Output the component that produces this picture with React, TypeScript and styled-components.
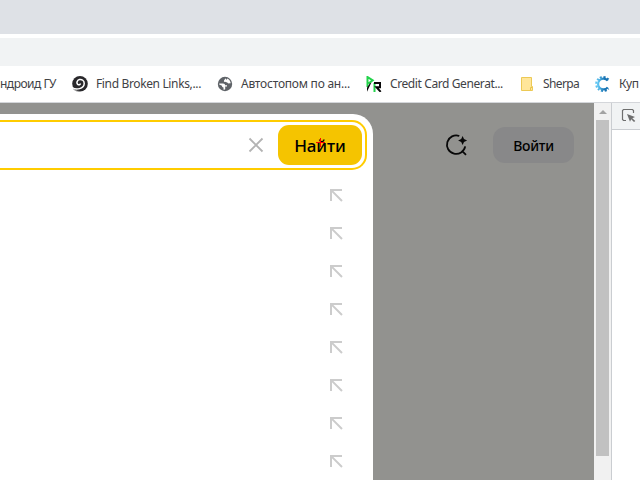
import React from 'react';
import styled, { createGlobalStyle } from 'styled-components';

const Global = createGlobalStyle`
  * { box-sizing: border-box; }
  body { margin: 0; overflow: hidden; background: #fff; font-family: "Noto Sans", "Open Sans", sans-serif; }
  svg { display: block; flex: none; }
`;

const Browser = styled.div`
  width: 640px;
  height: 480px;
  overflow: hidden;
  display: flex;
  flex-direction: column;
`;
const TabStrip = styled.div`
  height: 34px;
  flex: none;
  background: #dee1e6;
`;
const AddressBar = styled.div`
  height: 28px;
  flex: none;
  margin-top: 4px;
  background: #f1f3f4;
`;
const Bookmarks = styled.nav`
  height: 37px;
  flex: none;
  display: flex;
  align-items: center;
  border-bottom: 1px solid #d4d6da;
  overflow: hidden;
`;
const Bookmark = styled.div<{ $width: number }>`
  display: flex;
  align-items: center;
  flex: none;
  gap: 8px;
  width: ${p => p.$width}px;
`;
const Label = styled.span<{ $spacing?: number }>`
  font-size: 12px;
  line-height: 16px;
  white-space: nowrap;
  color: #3f4246;
  letter-spacing: ${p => p.$spacing ?? 0}px;
`;
const Main = styled.div`
  flex: 1;
  min-height: 0;
  display: flex;
`;
const Page = styled.main`
  width: 594px;
  flex: none;
  display: flex;
  align-items: flex-start;
  background: #92928f;
`;
const SearchPanel = styled.section`
  width: 373px;
  height: 366px;
  margin-top: 11px;
  padding-top: 6px;
  background: #fff;
  border-top-right-radius: 20px;
`;
const SearchField = styled.div`
  width: 367px;
  height: 50px;
  display: flex;
  align-items: center;
  justify-content: flex-end;
  gap: 14px;
  padding-right: 3px;
  border: 2px solid #fc0;
  border-left: 0;
  border-radius: 0 15px 15px 0;
`;
const FindButton = styled.button`
  position: relative;
  width: 84px;
  height: 40px;
  padding: 1px 0 0;
  border: 0;
  border-radius: 11px;
  background: #f5c400;
  color: #000;
  font: 500 17px/24px "Noto Sans", sans-serif;
  letter-spacing: -0.1px;
`;
const Cursor = styled.svg`
  position: absolute;
  left: 38px;
  top: 13px;
`;
const Suggestions = styled.div`
  display: flex;
  flex-direction: column;
  align-items: flex-end;
  padding: 6px 30px 0 0;
`;
const Suggestion = styled.div`
  height: 38px;
  display: flex;
  align-items: center;
`;
const Account = styled.div`
  display: flex;
  align-items: center;
  gap: 25px;
  margin: 24px 0 0 71px;
`;
const Login = styled.button`
  width: 81px;
  height: 36px;
  padding: 1px 0 0;
  border: 0;
  border-radius: 12px;
  background: #888889;
  color: #000;
  font: 500 14px/20px "Noto Sans", sans-serif;
  letter-spacing: -0.3px;
`;
const Scrollbar = styled.div`
  width: 17px;
  flex: none;
  display: flex;
  flex-direction: column;
  align-items: center;
  background: #f1f1f1;
`;
const ScrollArrow = styled.div`
  height: 17px;
  display: flex;
  align-items: center;
`;
const Thumb = styled.div`
  width: 13px;
  height: 336px;
  background: #c1c1c1;
`;
const DevTools = styled.aside`
  flex: 1;
  border-left: 1px solid #cacdd1;
  background: #fff;
`;
const DevToolbar = styled.div`
  height: 27px;
  display: flex;
  align-items: center;
  padding-left: 9px;
  background: #f1f3f4;
  border-bottom: 1px solid #cacdd1;
`;

const Swirl = () => (
  <svg width="16" height="16" viewBox="0 0 16 16">
    <circle cx="8" cy="7.8" r="7.8" fill="#29282b" />
    <path d="M0 11.5C4.2 14.4 11.9 12.8 12.2 7.8C12.4 4.6 9.8 3 7.4 3.6C5 4.2 4.2 7 5.8 8.4C6.8 9.2 8.3 8.8 8.4 7.5" fill="none" stroke="#fff" strokeWidth="1.5" />
    <path d="M0 11.2L5.5 16H0Z" fill="#fff" />
    <path d="M1.4 13.2Q4 15.5 7.5 15.3" fill="none" stroke="#888" strokeWidth=".8" />
  </svg>
);
const Globe = () => (
  <svg width="16" height="16" viewBox="0 0 16 16">
    <circle cx="8" cy="8" r="7.2" fill="#5f6368" />
    <path d="M2.2 7.6H6C7.6 7.6 8 8.5 8 9.2H10V10.6H8.2V13.3C7.6 13.8 6.8 13.7 6.5 13.4V11.6C5.4 11.5 5 10.7 5 9.8L2.2 8.6ZM8.6 2.3C7.8 3.9 6.9 3.8 6.9 5.4C8.1 6.3 9.3 5.7 10.2 6.6C11 7.8 12.2 7.4 13.7 7.3C13.5 5.1 12.1 3.2 10.2 2.5L9.5 4Z" fill="#fff" />
  </svg>
);
const Monogram = () => (
  <svg width="16" height="16" viewBox="0 0 16 16">
    <path d="M1.5 11V1L6.7 4.3L2.5 7.5" fill="none" stroke="#23d34b" strokeWidth="2" />
    <path d="M5.4 6.6L1 15.8V11.6L3.8 7.5Z" fill="#080808" />
    <path d="M8.5 16V7" stroke="#23d34b" strokeWidth="2" />
    <path d="M8 7.1H14V11.2H10.5L14.7 15.8" fill="none" stroke="#080808" strokeWidth="2" />
  </svg>
);
const Note = () => (
  <svg width="16" height="16" viewBox="0 0 16 16">
    <path d="M2.5 1.5H12.5V10.5H13.5V14.5H2.5Z" fill="#ffe69a" stroke="#ecc955" />
    <path d="M11.5 14V11.5H13" fill="none" stroke="#e9c44d" />
  </svg>
);
const Gear = () => (
  <svg width="16" height="16" viewBox="0 0 16 16">
    <defs>
      <linearGradient id="gear" x1="0" x2="1"><stop stopColor="#62c8f4" /><stop offset=".65" stopColor="#1874b4" /></linearGradient>
    </defs>
    <path d="M12.7 4.7A5.4 5.4 0 1 0 12.7 11.3" fill="none" stroke="url(#gear)" strokeWidth="2.2" />
    <path d="M13.5 3.5A7 7 0 1 0 13.5 12.5" fill="none" stroke="url(#gear)" strokeWidth="2" strokeDasharray="2 1.6" />
  </svg>
);
const Clear = () => (
  <svg width="16" height="16" viewBox="0 0 16 16">
    <path d="M1.5 1.5L14.5 14.5M14.5 1.5L1.5 14.5" stroke="#b3b3b3" strokeWidth="1.8" />
  </svg>
);
const InsertArrow = () => (
  <svg width="13" height="13" viewBox="0 0 13 13">
    <path d="M12 1H1V12M1.4 1.4L12 12" fill="none" stroke="#ccc" strokeWidth="2" />
  </svg>
);
const SmartSearch = () => (
  <svg width="24" height="24" viewBox="0 0 24 24">
    <path d="M15.3 3A9.2 9.2 0 1 0 21.2 13.4M18.5 18.3L22 21.8" fill="none" stroke="#080808" strokeWidth="1.8" />
    <path d="M18.6 3L20 6L23.1 7.5L20 9L18.6 12L17.2 9L14.1 7.5L17.2 6Z" fill="#080808" />
  </svg>
);
const Inspect = () => (
  <svg width="16" height="16" viewBox="0 0 16 16">
    <path d="M5 12.5H2.5L1.5 11.5V2.5L2.5 1.5H11.5L12.5 2.5V5" fill="none" stroke="#6e6e6e" strokeWidth="1.2" />
    <path d="M6 6L14 9L11.3 10.2L14.3 13L13 14L10.2 11.2L9 13.7Z" fill="#6e6e6e" />
  </svg>
);

export default function App() {
  return (
    <>
      <Global />
      <Browser>
        <TabStrip />
        <AddressBar />
        <Bookmarks>
          <Bookmark $width={72}><Label $spacing={-0.5}>ндроид ГУ</Label></Bookmark>
          <Bookmark $width={145}><Swirl /><Label $spacing={-0.36}>Find Broken Links,...</Label></Bookmark>
          <Bookmark $width={149}><Globe /><Label $spacing={-0.23}>Автостопом по ан...</Label></Bookmark>
          <Bookmark $width={153}><Monogram /><Label $spacing={-0.4}>Credit Card Generat...</Label></Bookmark>
          <Bookmark $width={76}><Note /><Label $spacing={-0.6}>Sherpa</Label></Bookmark>
          <Bookmark $width={45}><Gear /><Label $spacing={-0.4}>Куп</Label></Bookmark>
        </Bookmarks>
        <Main>
          <Page>
            <SearchPanel>
              <SearchField>
                <Clear />
                <FindButton>
                  Найти
                  <Cursor width="9" height="9" viewBox="0 0 9 9"><path d="M4.5 0V9M0 4.5H9" stroke="#f00" /></Cursor>
                </FindButton>
              </SearchField>
              <Suggestions>
                {Array.from({ length: 8 }, (_, i) => <Suggestion key={i}><InsertArrow /></Suggestion>)}
              </Suggestions>
            </SearchPanel>
            <Account><SmartSearch /><Login>Войти</Login></Account>
          </Page>
          <Scrollbar>
            <ScrollArrow><svg width="8" height="4" viewBox="0 0 8 4"><path d="M0 4L4 0L8 4Z" fill="#a3a3a3" /></svg></ScrollArrow>
            <Thumb />
          </Scrollbar>
          <DevTools><DevToolbar><Inspect /></DevToolbar></DevTools>
        </Main>
      </Browser>
    </>
  );
}
